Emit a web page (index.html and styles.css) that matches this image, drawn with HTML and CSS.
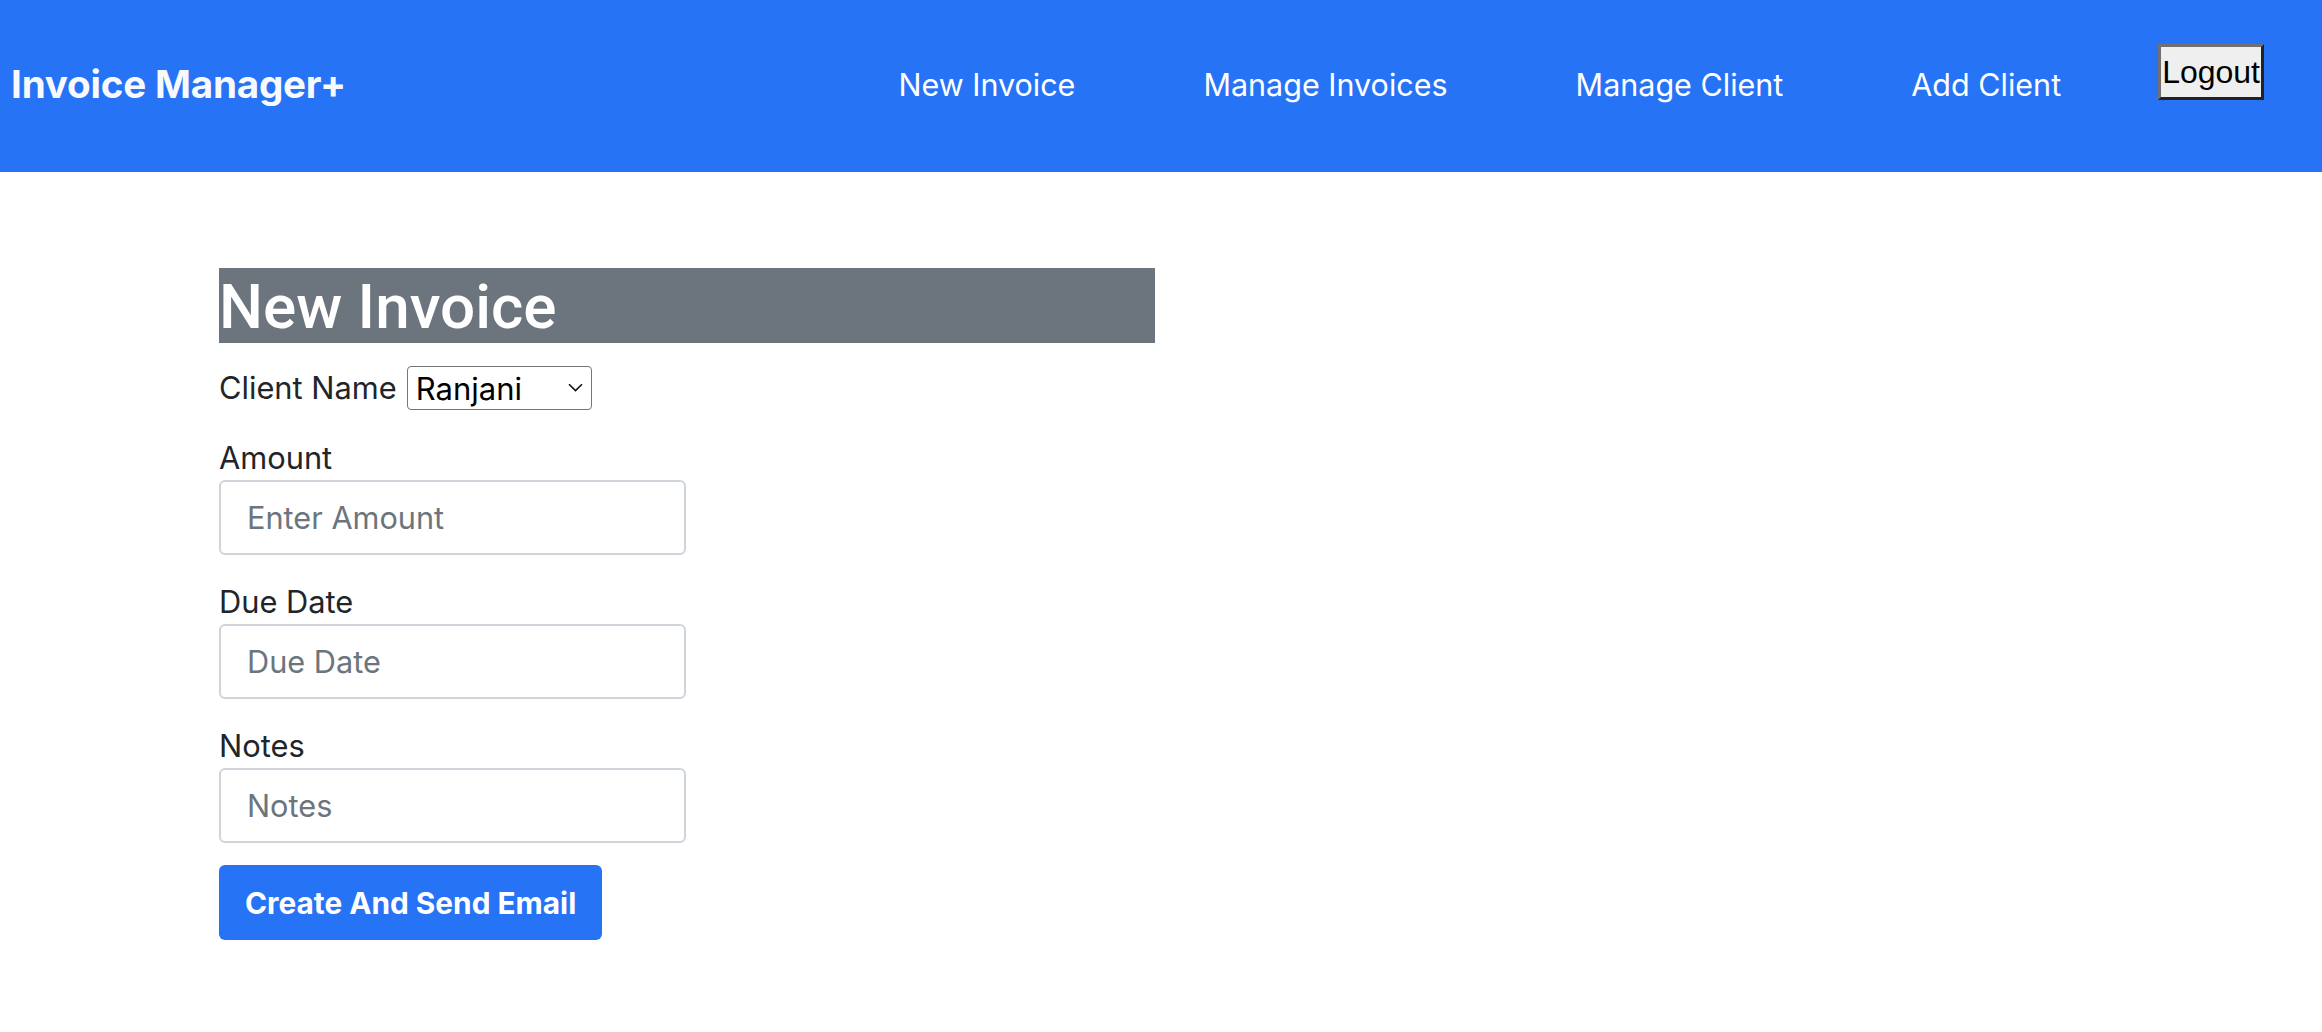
FILE: index.html
```html
<!DOCTYPE html>
<html lang="en">
<head>
<meta charset="utf-8">
<title>Invoice Manager+</title>
<link rel="stylesheet" href="styles.css">
</head>
<body>
<header class="topbar">
  <a class="brand" href="#">Invoice Manager+</a>
  <nav class="nav">
    <a class="nav-link" href="#">New Invoice</a>
    <a class="nav-link" href="#">Manage Invoices</a>
    <a class="nav-link" href="#">Manage Client</a>
    <a class="nav-link" href="#">Add Client</a>
    <button class="logout" type="button">Logout</button>
  </nav>
</header>
<main class="page">
  <h1 class="title">New Invoice</h1>
  <form class="invoice-form">
    <div class="client-row">
      <label class="inline-label" for="client">Client Name</label>
      <span class="select-wrap">
        <select class="client-select" id="client">
          <option>Ranjani</option>
        </select>
        <svg class="chev" width="15" height="9" viewBox="0 0 15 9"><path d="M1 1.2 L7.5 7.6 L14 1.2" fill="none" stroke="#111" stroke-width="1.6"/></svg>
      </span>
    </div>
    <div class="group">
      <label class="label" for="amount">Amount</label>
      <input class="field" id="amount" type="text" placeholder="Enter Amount">
    </div>
    <div class="group">
      <label class="label" for="due">Due Date</label>
      <input class="field" id="due" type="text" placeholder="Due Date">
    </div>
    <div class="group">
      <label class="label" for="notes">Notes</label>
      <input class="field" id="notes" type="text" placeholder="Notes">
    </div>
    <button class="submit" type="button">Create And Send Email</button>
  </form>
</main>
</body>
</html>
```
FILE: styles.css
```css
* { box-sizing: border-box; }
html, body { margin: 0; padding: 0; background: #fff; }
body { font-family: Inter, "Noto Sans", sans-serif; color: #212529; }

.topbar {
  height: 172px;
  background: #2773f5;
  display: flex;
  align-items: center;
  justify-content: space-between;
  padding: 0 58px 0 11px;
}
.brand {
  color: #f8f9fa;
  font-weight: 700;
  font-size: 38.6px;
  text-decoration: none;
  letter-spacing: -0.2px;
  margin-bottom: 4px;
}
.nav {
  display: flex;
  align-items: center;
}
.nav-link {
  color: #fff;
  font-size: 30.5px;
  text-decoration: none;
  padding: 0 64px 3px;
}
.logout {
  font-family: "Liberation Sans", Arial, sans-serif;
  font-size: 32px;
  color: #000;
  background: #efefef;
  border: 3px solid;
  border-color: #707070 #222 #222 #707070;
  padding: 0 1px;
  height: 56px;
  line-height: 48px;
  margin-left: 33px;
  margin-bottom: 28px;
}

.page {
  padding: 96px 0 0 219px;
}
.title {
  width: 936px;
  height: 75px;
  margin: 0;
  background: #6c757d;
  color: #fff;
  font-family: Roboto, "Liberation Sans", Arial, sans-serif;
  font-weight: 500;
  font-size: 62px;
  line-height: 78px;
}
.client-row {
  display: flex;
  align-items: center;
  gap: 10px;
  margin-top: 23px;
  margin-bottom: 25px;
}
.inline-label {
  font-size: 30.8px;
  line-height: 44px;
}
.select-wrap {
  position: relative;
  display: inline-flex;
}
.client-select {
  appearance: none;
  -webkit-appearance: none;
  width: 185px;
  height: 44px;
  border: 1.5px solid #767676;
  border-radius: 4px;
  background: #fff;
  font-family: Inter, "Noto Sans", sans-serif;
  font-size: 31px;
  color: #000;
  padding: 0 0 0 8px;
}
.chev {
  position: absolute;
  right: 9px;
  top: 17px;
  pointer-events: none;
}
.group {
  margin-bottom: 24px;
}
.label {
  display: block;
  font-size: 30.8px;
  line-height: 45px;
}
.field {
  display: block;
  width: 467px;
  height: 75px;
  border: 2px solid #ced4da;
  border-radius: 6px;
  padding: 0 26px;
  font-family: Inter, "Noto Sans", sans-serif;
  font-size: 30.7px;
  color: #212529;
}
.field::placeholder { color: #6c757d; }
.submit {
  height: 75px;
  padding: 0 26px;
  border: none;
  border-radius: 6px;
  background: #2773f5;
  color: #fff;
  font-family: Inter, "Noto Sans", sans-serif;
  font-weight: 700;
  font-size: 29.8px;
  margin-top: -2px;
}
```
